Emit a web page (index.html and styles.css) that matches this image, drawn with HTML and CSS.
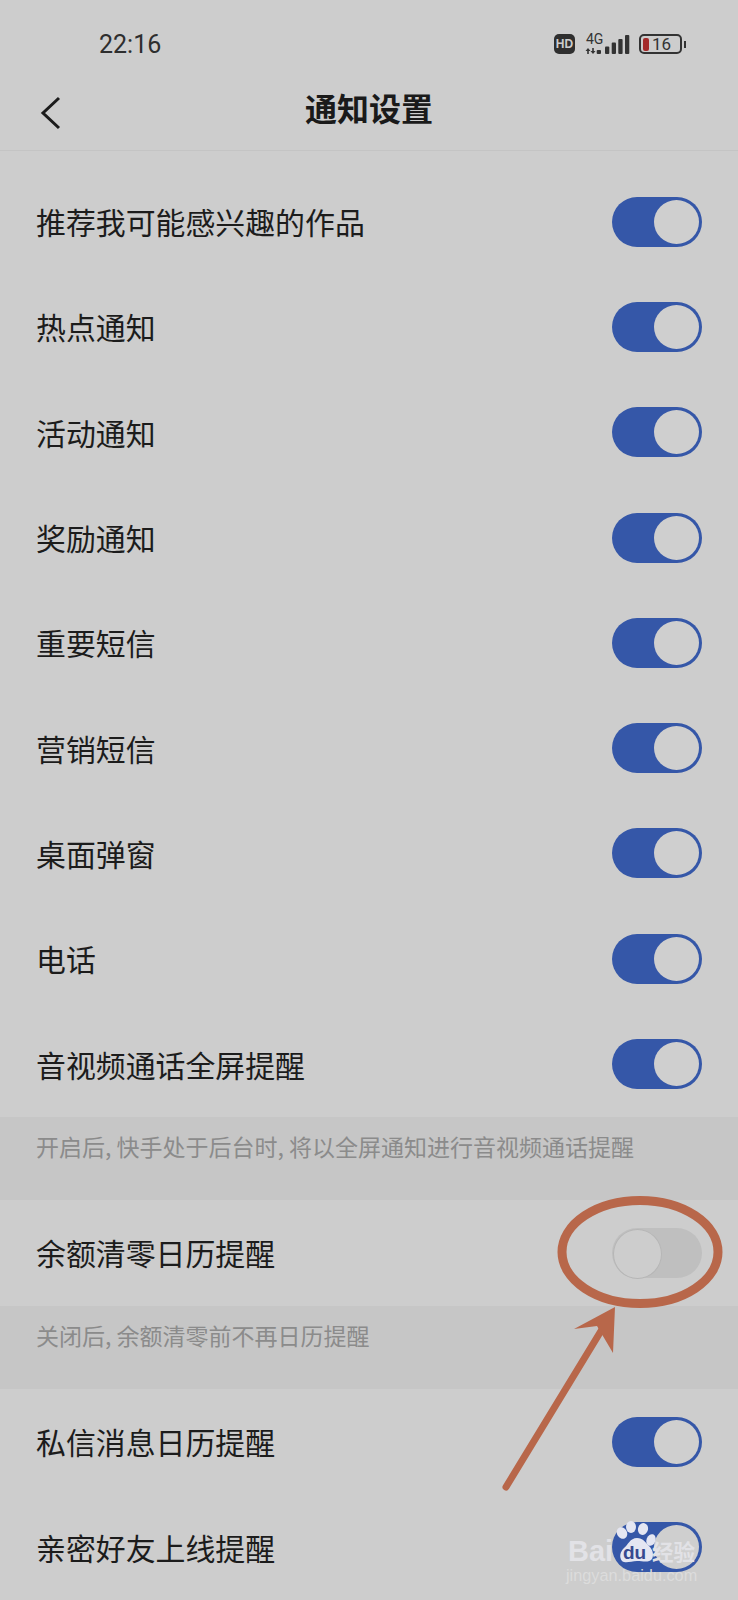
FILE: index.html
```html
<!DOCTYPE html>
<html lang="zh-CN">
<head>
<meta charset="utf-8">
<title>通知设置</title>
<link rel="stylesheet" href="styles.css">
</head>
<body>
<div class="page">
	<div class="status-bar">
		<span class="time">22:16</span>
		<div class="status-icons">
			<span class="hd">HD</span>
			<div class="signal">
				<span class="net">4G</span>
				<svg class="signal-svg" width="46" height="22" viewBox="0 0 46 22">
					<path d="M3 15L0.500 18H2.200V21H3.800V18H5.500Z"/>
					<path d="M8 21L5.500 18H7.200V15H8.800V18H10.500Z"/>
					<rect x="11.700" y="17" width="4.300" height="4" rx="1"/>
					<rect x="20" y="13.500" width="4.300" height="7.500" rx="1"/>
					<rect x="26.700" y="9.500" width="4.300" height="11.500" rx="1"/>
					<rect x="33.300" y="6" width="4.300" height="15" rx="1"/>
					<rect x="40" y="2" width="4.300" height="19" rx="1"/>
				</svg>
			</div>
			<div class="battery">
				<div class="battery-body"><span class="battery-low"></span><span class="battery-num">16</span></div>
				<span class="battery-nub"></span>
			</div>
		</div>
	</div>

	<div class="header">
		<svg class="back" width="22" height="34" viewBox="0 0 22 34"><path d="M19 2L3 17l16 15"/></svg>
		<h1>通知设置</h1>
	</div>

	<div class="list">
		<div class="row"><span class="label">推荐我可能感兴趣的作品</span><span class="toggle on"></span></div>
		<div class="row"><span class="label">热点通知</span><span class="toggle on"></span></div>
		<div class="row"><span class="label">活动通知</span><span class="toggle on"></span></div>
		<div class="row"><span class="label">奖励通知</span><span class="toggle on"></span></div>
		<div class="row"><span class="label">重要短信</span><span class="toggle on"></span></div>
		<div class="row"><span class="label">营销短信</span><span class="toggle on"></span></div>
		<div class="row"><span class="label">桌面弹窗</span><span class="toggle on"></span></div>
		<div class="row"><span class="label">电话</span><span class="toggle on"></span></div>
		<div class="row"><span class="label">音视频通话全屏提醒</span><span class="toggle on"></span></div>
		<div class="hint">开启后, 快手处于后台时, 将以全屏通知进行音视频通话提醒</div>
		<div class="row"><span class="label">余额清零日历提醒</span><span class="toggle"></span></div>
		<div class="hint">关闭后, 余额清零前不再日历提醒</div>
		<div class="row"><span class="label">私信消息日历提醒</span><span class="toggle on"></span></div>
		<div class="row"><span class="label">亲密好友上线提醒</span><span class="toggle on"></span></div>
	</div>

	<!-- red circle and arrow drawn over the screenshot -->
	<svg class="mark" width="738" height="1600" viewBox="0 0 738 1600">
		<ellipse cx="640" cy="1252" rx="78" ry="51.500"/>
		<path class="shaft" d="M506 1487L604 1326"/>
		<path class="head" d="M615 1307L574 1329L597 1326L613 1353Z"/>
	</svg>

	<div class="watermark">
		<svg class="paw" width="44" height="46" viewBox="0 0 44 46">
			<ellipse cx="7" cy="13" rx="5" ry="6" transform="rotate(-30 7 13)"/>
			<ellipse cx="16" cy="7" rx="5" ry="6"/>
			<ellipse cx="28" cy="9" rx="5" ry="6" transform="rotate(15 28 9)"/>
			<ellipse cx="36" cy="20" rx="4.500" ry="6" transform="rotate(20 36 20)"/>
			<path d="M22 18c6 0 8 4 12 8 4 4 5 9 3 13-3 4-9 2-15 2s-11 3-15 0c-3-4-2-9 2-13 4-3 6-10 13-10z"/>
		</svg>
		<span class="wm-bai">Bai</span>
		<span class="wm-du">du</span>
		<span class="wm-jy">经验</span>
		<span class="wm-url">jingyan.baidu.com</span>
	</div>
</div>
</body>
</html>
```

FILE: styles.css
```css
* {
	margin: 0;
	padding: 0;
	box-sizing: border-box;
}
html, body {
	width: 738px;
	height: 1600px;
	overflow: hidden;
	background: #cdcdcd;
}
body {
	font-family: "Noto Sans CJK SC", "Noto Sans", sans-serif;
	color: #1c1c1c;
}
.page {
	position: relative;
	width: 738px;
	height: 1600px;
	overflow: hidden;
}

.status-bar {
	height: 76px;
	padding: 12px 52px 0 99px;
	display: flex;
	align-items: center;
	justify-content: space-between;
}
.time {
	font-family: Roboto, sans-serif;
	font-size: 25px;
	color: #2e2e2e;
}
.status-icons {
	display: flex;
	align-items: center;
}
.hd {
	width: 21px;
	height: 20px;
	background: #2f2f2f;
	color: #cdcdcd;
	border-radius: 5px;
	font-family: "Liberation Sans", sans-serif;
	font-weight: bold;
	font-size: 12px;
	line-height: 20px;
	text-align: center;
}
.signal {
	position: relative;
	width: 46px;
	height: 22px;
	margin-left: 10px;
}
.net {
	position: absolute;
	left: 1px;
	top: -1px;
	font-family: Roboto, sans-serif;
	font-size: 14px;
	line-height: 14px;
	color: #333;
}
.signal-svg {
	position: absolute;
	left: 0;
	top: 0;
	fill: #333;
}
.battery {
	display: flex;
	align-items: center;
	margin-left: 8px;
}
.battery-body {
	width: 43px;
	height: 20px;
	border: 2px solid #333;
	border-radius: 5px;
	display: flex;
	align-items: center;
	padding-left: 2px;
}
.battery-low {
	width: 6px;
	height: 13px;
	background: #a32b2b;
	border-radius: 2px;
}
.battery-num {
	margin-left: 3px;
	font-family: Roboto, sans-serif;
	font-size: 17px;
	line-height: 16px;
	color: #333;
}
.battery-nub {
	width: 2px;
	height: 7px;
	margin-left: 2px;
	background: #333;
}

.header {
	position: relative;
	height: 75px;
	border-bottom: 1px solid #c4c4c4;
	display: flex;
	align-items: center;
	justify-content: center;
}
.header h1 {
	font-size: 32px;
	font-weight: 700;
	line-height: 40px;
	color: #1a1a1a;
	margin-bottom: 12px;
}
.back {
	position: absolute;
	left: 40px;
	top: 20px;
}
.back path {
	fill: none;
	stroke: #1c1c1c;
	stroke-width: 3;
}

.list {
	padding-top: 18px;
}
.row {
	height: 105.300px;
	padding: 0 36px;
	display: flex;
	align-items: center;
	justify-content: space-between;
	font-size: 29.900px;
}
.label {
	margin-bottom: 1px;
}
.hint {
	height: 83.600px;
	padding: 12px 36px 0;
	background: #c6c6c6;
	color: #8b8b8b;
	font-size: 23px;
	line-height: 34px;
}
.toggle {
	position: relative;
	width: 90px;
	height: 50px;
	border-radius: 25px;
	background: #bfbfbf;
}
.toggle::after {
	content: "";
	position: absolute;
	left: 1px;
	top: 1px;
	width: 47px;
	height: 48px;
	border-radius: 50%;
	background: #cdcdcd;
	border: 1.500px solid #b6b6b6;
}
.toggle.on {
	background: #3557a8;
}
.toggle.on::after {
	left: 42px;
	top: 3px;
	width: 45px;
	height: 44px;
	border: none;
	background: #cfcfcf;
}

.mark {
	position: absolute;
	left: 0;
	top: 0;
	fill: none;
	stroke: #b8674a;
	stroke-width: 9;
	stroke-linecap: round;
}
.mark .shaft {
	stroke-width: 7;
}
.mark .head {
	fill: #b8674a;
	stroke: none;
}

.watermark {
	position: absolute;
	left: 560px;
	top: 1520px;
	width: 150px;
	height: 70px;
	color: #e2e2e6;
}
.paw {
	position: absolute;
	left: 55px;
	top: 0;
	fill: #e4e6f2;
}
.wm-bai {
	position: absolute;
	left: 8px;
	top: 16px;
	font-family: "Liberation Sans", sans-serif;
	font-weight: bold;
	font-size: 29px;
	line-height: 30px;
}
.wm-du {
	position: absolute;
	left: 63px;
	top: 21px;
	font-family: "Liberation Sans", sans-serif;
	font-weight: bold;
	font-size: 19px;
	line-height: 24px;
	color: #37498f;
}
.wm-jy {
	position: absolute;
	left: 92px;
	top: 18px;
	font-size: 21.500px;
	font-weight: 700;
	line-height: 26px;
}
.wm-url {
	position: absolute;
	left: 6px;
	top: 45px;
	font-family: "Liberation Sans", sans-serif;
	font-size: 16.300px;
	line-height: 20px;
	color: #dcdcdc;
}
```
